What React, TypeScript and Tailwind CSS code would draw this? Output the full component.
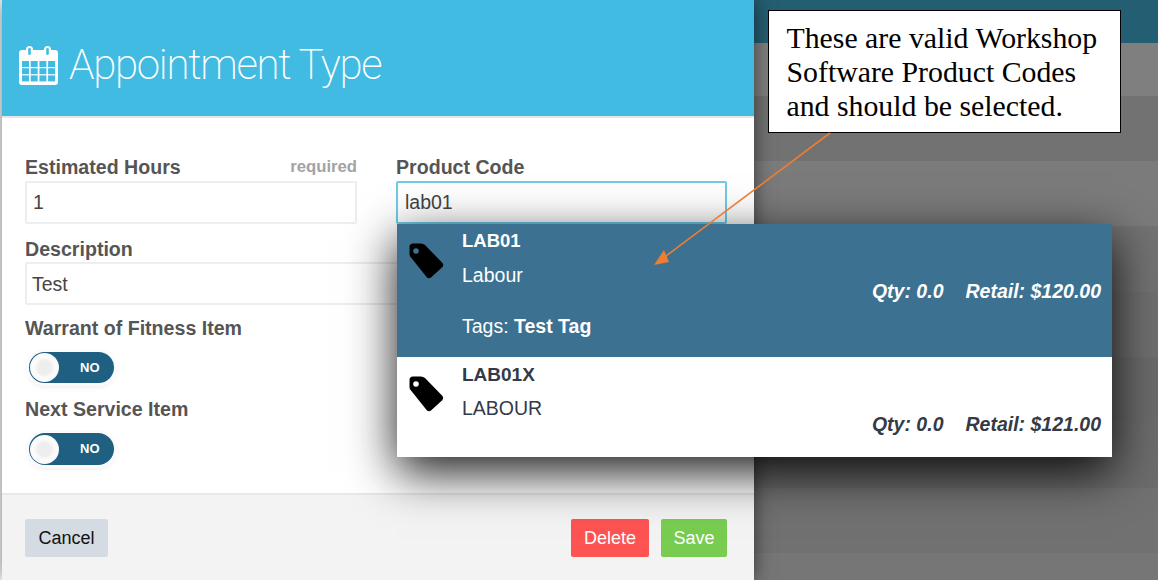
const stripes = [
  { h: "h-[43px]", c: "bg-[#245e72]" },
  { h: "h-[53px]", c: "bg-[#7f7f7f]" },
  { h: "h-[65px]", c: "bg-[#727272]" },
  { h: "h-[65px]", c: "bg-[#7b7b7b]" },
  { h: "h-[66px]", c: "bg-[#727272]" },
  { h: "h-[65px]", c: "bg-[#6f6f6f]" },
  { h: "h-[65px]", c: "bg-[#6b6b6b]" },
  { h: "h-[66px]", c: "bg-[#6c6c6c]" },
  { h: "h-[65px]", c: "bg-[#717171]" },
  { h: "flex-1", c: "bg-[#767676]" },
];

const TagIcon = ({ hole }: { hole: string }) => (
  <svg viewBox="0 0 36 38" className="w-[36px] h-[38px]">
    <path
      fill="#000"
      d="M4 0.5 L12 0.5 Q14 0.5 16 2 L33.5 20 Q35 22 33.5 24 L22 34.5 Q20 36 18 34.5 L2 14.5 Q0.5 13 0.5 11 L0.5 4 Q0.5 0.5 4 0.5 Z"
    />
    <circle cx="7" cy="8" r="2.8" fill={hole} />
  </svg>
);

const CalendarIcon = () => {
  const cols = [3, 11.7, 20.4, 29.1];
  const rows = [15, 22.2, 29.4];
  return (
    <svg viewBox="0 0 39 39" className="w-[39px] h-[39px]">
      <rect x="0" y="4" width="39" height="35" rx="3" fill="#fff" />
      <rect x="7" y="0" width="7" height="11" rx="3.5" fill="#fff" />
      <rect x="25" y="0" width="7" height="11" rx="3.5" fill="#fff" />
      <rect x="9.2" y="2" width="2.6" height="7" rx="1.3" fill="#41bbe2" />
      <rect x="27.2" y="2" width="2.6" height="7" rx="1.3" fill="#41bbe2" />
      {rows.map((y) =>
        cols.map((x) => <rect key={`${x}-${y}`} x={x} y={y} width="7" height="6" fill="#41bbe2" />)
      )}
    </svg>
  );
};

const Toggle = ({ tall }: { tall?: boolean }) => (
  <div
    className={
      tall
        ? "flex items-center w-[85px] h-[32px] rounded-full bg-[#1f5f81] shadow-[0_0_0_3px_#fbfbfb,0_3px_6px_rgba(0,0,0,0.1)] pl-[1px]"
        : "flex items-center w-[85px] h-[31px] rounded-full bg-[#1f5f81] shadow-[0_0_0_3px_#fbfbfb,0_3px_6px_rgba(0,0,0,0.1)] pl-[1px]"
    }
  >
    <div className="w-[29px] h-[29px] rounded-full bg-[#fbfbfb] flex items-center justify-center">
      <div className="w-[17px] h-[17px] rounded-full bg-[#eeeeee] blur-[1px]" />
    </div>
    <span className="ml-[21px] text-[13px] font-bold text-white">NO</span>
  </div>
);

const Label = ({ children }: { children: React.ReactNode }) => (
  <label className="block text-[19.6px] leading-[20px] font-bold text-[#555555]">{children}</label>
);

const ProductRow = ({
  selected,
  code,
  name,
  retail,
}: {
  selected?: boolean;
  code: string;
  name: string;
  retail: string;
}) => (
  <div
    className={
      selected
        ? "relative flex h-[133px] bg-[#3c7191] text-white"
        : "relative flex h-[100px] bg-white text-[#343a46]"
    }
  >
    <div className="pt-[19px] pl-[12px] w-[65px] shrink-0">
      <TagIcon hole={selected ? "#3c7191" : "#fff"} />
    </div>
    <div className={selected ? "flex-1 pt-[6px] text-[19.5px] leading-[22px]" : "flex-1 pt-[7px] text-[19.5px] leading-[22px]"}>
      <div className={selected ? "font-bold text-[18.5px]" : "font-bold text-[19px]"}>{code}</div>
      <div className={selected ? "mt-[12px]" : "mt-[11px]"}>{name}</div>
      {selected && (
        <div className="mt-[29px]">
          Tags: <span className="font-bold">Test Tag</span>
        </div>
      )}
    </div>
    <div className="self-start mt-[56px] pr-[11px] flex gap-[22px] text-[19.5px] leading-[22px] font-bold italic">
      <span>Qty: 0.0</span>
      <span>{retail}</span>
    </div>
  </div>
);

export default function App() {
  return (
    <div className="relative w-[1158px] h-[580px] overflow-hidden flex bg-white font-['Liberation_Sans',Arial,sans-serif]">
      {/* Modal */}
      <div className="relative z-10 ml-[2px] w-[752px] h-full flex flex-col bg-white shadow-[0_0_18px_rgba(0,0,0,0.55)]">
        <div className="h-[118px] shrink-0 bg-[#41bbe2] border-b-2 border-[#e6e6e6] flex items-center pl-[17px] pt-[14px] gap-[11px]">
          <CalendarIcon />
          <h1 className="text-[42px] leading-none tracking-[-1.3px] font-extralight text-white font-['Roboto',sans-serif]">
            Appointment Type
          </h1>
        </div>

        <div className="flex-1 px-[23px] pt-[39px]">
          <div className="grid grid-cols-[332px_331px] gap-x-[39px]">
            <div>
              <div className="flex items-end justify-between">
                <Label>Estimated Hours</Label>
                <span className="text-[16.7px] leading-[20px] font-bold text-[#a3a3a3]">required</span>
              </div>
              <div className="mt-[4px] h-[43px] rounded-[2px] border-2 border-[#eceef1] flex items-center pl-[6px] text-[19.5px] text-[#444444]">
                1
              </div>
            </div>
            <div>
              <Label>Product Code</Label>
              <div className="mt-[4px] h-[43px] rounded-[2px] border-2 border-[#6ecbe9] flex items-center pl-[7px] text-[19.5px] text-[#444444]">
                lab01
              </div>
            </div>
          </div>

          <div className="mt-[15px]">
            <Label>Description</Label>
            <div className="mt-[3px] h-[43px] rounded-[2px] border-2 border-[#eceef1] flex items-center pl-[5px] pt-[2px] text-[19.5px] text-[#444444]">
              Test
            </div>
          </div>

          <div className="mt-[13px]">
            <Label>Warrant of Fitness Item</Label>
            <div className="mt-[14px] ml-[4px]">
              <Toggle />
            </div>
          </div>

          <div className="mt-[16px]">
            <Label>Next Service Item</Label>
            <div className="mt-[14px] ml-[4px]">
              <Toggle tall />
            </div>
          </div>
        </div>

        <div className="h-[87px] shrink-0 bg-[#f3f3f3] border-t-2 border-[#e8e8e8] px-[23px] pt-[24px] flex items-start">
          <button className="w-[83px] h-[38px] rounded-[2px] bg-[#d5dbe3] text-[18px] text-[#111111]">Cancel</button>
          <div className="ml-auto flex gap-[12px] pr-[4px]">
            <button className="w-[78px] h-[38px] rounded-[2px] bg-[#fd5353] text-[18px] text-white">Delete</button>
            <button className="w-[66px] h-[38px] rounded-[2px] bg-[#78cd51] text-[18px] text-white">Save</button>
          </div>
        </div>
      </div>

      {/* Dimmed page behind the modal */}
      <div className="flex-1 flex flex-col">
        {stripes.map((s, i) => (
          <div key={i} className={`${s.h} ${s.c} shrink-0`} />
        ))}
      </div>

      {/* Search results dropdown */}
      <div className="absolute z-20 left-[397px] top-[224px] w-[715px] shadow-[0_15px_45px_rgba(0,0,0,0.9)]">
        <ProductRow selected code="LAB01" name="Labour" retail="Retail: $120.00" />
        <ProductRow code="LAB01X" name="LABOUR" retail="Retail: $121.00" />
      </div>

      {/* Annotation */}
      <div className="absolute z-30 left-[768px] top-[10px] w-[353px] h-[123px] bg-white border border-black pl-[17.5px] pt-[10px] text-[29.8px] leading-[34px] text-black font-['Liberation_Serif',serif]">
        These are valid Workshop
        <br />
        Software Product Codes
        <br />
        and should be selected.
      </div>
      <svg className="absolute z-30 left-0 top-0 w-[1158px] h-[580px] pointer-events-none" viewBox="0 0 1158 580">
        <line x1="830" y1="133" x2="662" y2="259" stroke="#ed7d31" strokeWidth="1.6" />
        <polygon points="654,265 664,250 669,262" fill="#ed7d31" />
      </svg>
    </div>
  );
}
